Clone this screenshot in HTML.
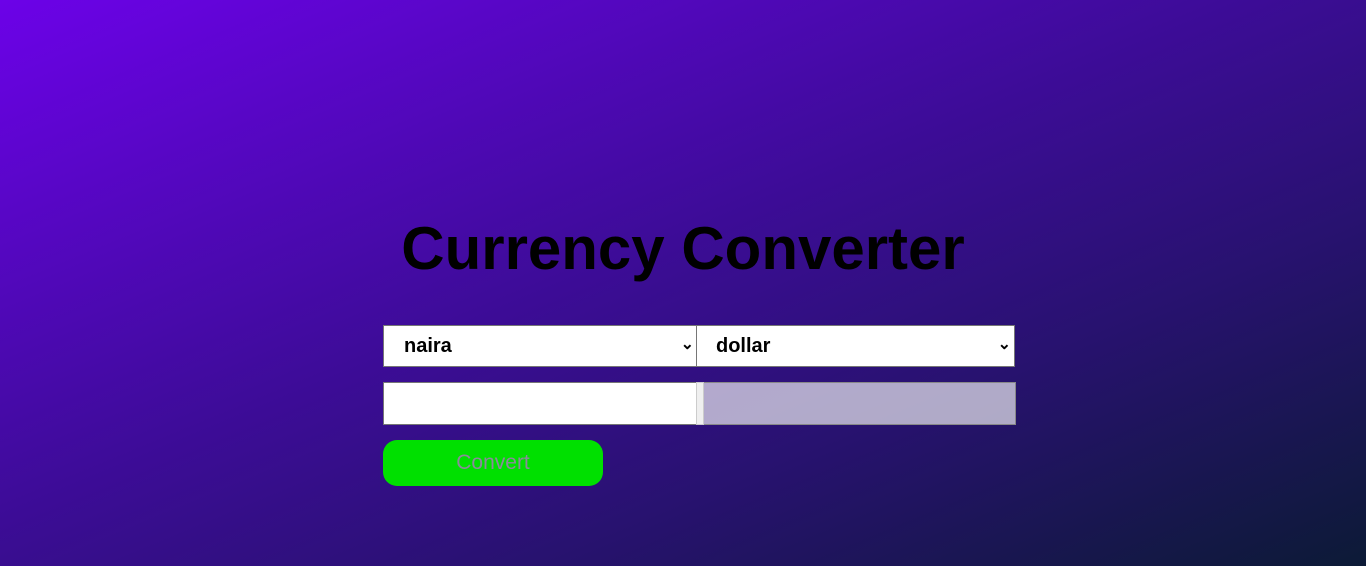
<!DOCTYPE html>
<html><head><style>
html,body{margin:0;width:1366px;height:566px;overflow:hidden}
body{background:linear-gradient(to bottom right,#6c02e8 0%,#3d0c98 45%,#27126e 70%,#0c1a36 100%);font-family:"Liberation Sans",sans-serif;position:relative}
h1{position:absolute;left:0;width:1366px;text-align:center;top:214px;margin:0;font-size:60px;font-weight:bold;color:#000;line-height:70px}
.box{position:absolute;box-sizing:border-box;background:#fff;border:1px solid #767676}
.sel{font-size:20px;font-weight:bold;color:#000;line-height:41px;padding-left:20px}
.arr{position:absolute;right:2px;top:-2px;font-size:16px;font-weight:bold}
.btn{position:absolute;left:383px;top:440px;width:220px;height:46px;background:#00e000;border-radius:14px;color:#8a8a9a;font-size:21px;text-align:center;line-height:46px}
</style></head><body>
<h1>Currency Converter</h1>
<div class="box sel" style="left:383px;top:325px;width:314px;height:42px">naira<span class="arr">&#8964;</span></div>
<div class="box sel" style="left:696px;top:325px;width:319px;height:42px;padding-left:19px">dollar<span class="arr" style="right:3px">&#8964;</span></div>
<div class="box" style="left:383px;top:382px;width:314px;height:43px"></div>
<div style="position:absolute;left:696px;top:382px;width:8px;height:43px;background:#efefef;border:1px solid #ccc;box-sizing:border-box"></div>
<div style="position:absolute;left:704px;top:382px;width:312px;height:43px;background:rgba(235,235,240,0.7);border:1px solid #888;border-left:none;box-sizing:border-box"></div>
<div class="btn">Convert</div>
</body></html>
